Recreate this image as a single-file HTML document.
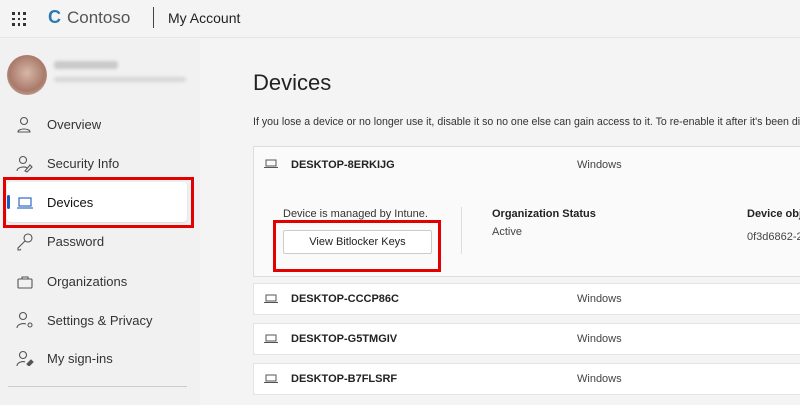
<!DOCTYPE html>
<html><head><meta charset="utf-8"><style>
*{margin:0;padding:0;box-sizing:border-box}
html,body{width:800px;height:405px;overflow:hidden}
body{background:#f4f4f4;font-family:"Liberation Sans",sans-serif;color:#222}
#w{position:relative;width:800px;height:405px;overflow:hidden}
.a{position:absolute;white-space:nowrap}
.hdr{left:0;top:0;width:800px;height:38px;background:#f4f4f4;border-bottom:1px solid #e6e6e6}
.side{left:0;top:39px;width:200px;height:366px;background:#f1f1f1}
.nav{font-size:13px;color:#333}
.ic{stroke:#555;fill:none;stroke-width:1.1}
.card{background:#fff;border:1px solid #ddd}
.row{left:253px;width:547px;height:32px;background:#fff;border:1px solid #e4e4e4;border-right:none}
.dn{font-size:11px;font-weight:bold;color:#222}
.win{font-size:11px;color:#444}
</style></head><body><div id="w">
<div class="a hdr"></div>
<div class="a" style="left:12px;top:12px;width:14px;height:14px;display:grid;grid-template-columns:repeat(3,2.5px);gap:3px">
<i style="background:#333;width:2.5px;height:2.5px"></i><i style="background:#333;width:2.5px;height:2.5px"></i><i style="background:#333;width:2.5px;height:2.5px"></i><i style="background:#333;width:2.5px;height:2.5px"></i><i style="background:#333;width:2.5px;height:2.5px"></i><i style="background:#333;width:2.5px;height:2.5px"></i><i style="background:#333;width:2.5px;height:2.5px"></i><i style="background:#333;width:2.5px;height:2.5px"></i><i style="background:#333;width:2.5px;height:2.5px"></i></div>
<div class="a" style="left:48px;top:7px;font-size:18px;color:#2a7ab0;font-weight:bold">C</div>
<div class="a" style="left:67px;top:8px;font-size:17px;color:#555">Contoso</div>
<div class="a" style="left:153px;top:7px;width:1px;height:21px;background:#444"></div>
<div class="a" style="left:168px;top:10px;font-size:14px;color:#222">My Account</div>
<div class="a side"></div>
<div class="a" style="left:7px;top:55px;width:40px;height:40px;border-radius:50%;background:radial-gradient(circle at 50% 45%,#d7b7a8,#a97a6a 60%,#d8d0cc)"></div>
<div class="a" style="left:54px;top:61px;width:64px;height:8px;background:#c9c9c9;border-radius:3px;filter:blur(1.5px)"></div>
<div class="a" style="left:54px;top:77px;width:132px;height:5px;background:#d6d6d6;border-radius:3px;filter:blur(1.5px)"></div>
<div class="a" style="left:7px;top:182px;width:180px;height:40px;background:#fff;border-radius:4px;box-shadow:0 1px 2px rgba(0,0,0,.1)"></div>
<div class="a" style="left:7px;top:195px;width:3px;height:14px;background:#1d5cbf;border-radius:2px"></div>
<svg class="a" style="left:16px;top:116px" width="18" height="250" viewBox="0 0 18 250">
<g class="ic"><circle cx="8" cy="5" r="3.5"/><path d="M2 16c0-4 12-4 12 0z"/>
<circle cx="7" cy="44" r="3.5"/><path d="M1 55c0-4 8-5 10-3M9 55l5-6 2 2-5 5z"/>
<rect x="3" y="82" width="12" height="8" stroke="#1d5cbf"/><path d="M1 92h16" stroke="#1d5cbf"/>
<circle cx="12" cy="122" r="4"/><path d="M9 125l-7 7v2h2l1-1"/>
<rect x="2" y="163" width="14" height="9" rx="1"/><path d="M6 163v-2h6v2"/>
<circle cx="7" cy="200" r="3.5"/><path d="M1 212c0-4 6-5 9-4"/><circle cx="14" cy="209" r="2"/>
<circle cx="7" cy="239" r="3.5"/><path d="M1 250c0-4 6-5 8-4"/><path d="M11 248l4-4 2 2-4 4z" fill="#555"/></g></svg>
<div class="a nav" style="left:47px;top:117px">Overview</div>
<div class="a nav" style="left:47px;top:156px">Security Info</div>
<div class="a nav" style="left:47px;top:195px;color:#111">Devices</div>
<div class="a nav" style="left:47px;top:234px">Password</div>
<div class="a nav" style="left:47px;top:274px">Organizations</div>
<div class="a nav" style="left:47px;top:313px">Settings &amp; Privacy</div>
<div class="a nav" style="left:47px;top:351px">My sign-ins</div>
<div class="a" style="left:8px;top:386px;width:179px;height:1px;background:#ccc"></div>
<div class="a" style="left:3px;top:177px;width:191px;height:51px;border:3px solid #e30000"></div>

<div class="a" style="left:253px;top:70px;font-size:22px;color:#222">Devices</div>
<div class="a" style="left:253px;top:116px;font-size:10.6px;color:#333">If you lose a device or no longer use it, disable it so no one else can gain access to it. To re-enable it after it's been disabled</div>
<div class="a card" style="left:253px;top:146px;width:547px;height:131px;background:#fafafa;border-right:none"></div>
<svg class="a" style="left:264px;top:159px" width="14" height="10"><rect x="2" y="1" width="10" height="6" fill="none" stroke="#555"/><path d="M0 8.5h14" stroke="#555"/></svg>
<div class="a dn" style="left:291px;top:159px">DESKTOP-8ERKIJG</div>
<div class="a win" style="left:577px;top:159px">Windows</div>
<div class="a" style="left:283px;top:208px;font-size:11px;color:#333">Device is managed by Intune.</div>
<div class="a" style="left:283px;top:230px;width:149px;height:24px;background:#fff;border:1px solid #ccc;border-radius:2px;font-size:11px;text-align:center;line-height:22px;color:#222">View Bitlocker Keys</div>
<div class="a" style="left:273px;top:220px;width:168px;height:52px;border:3px solid #e30000"></div>
<div class="a" style="left:461px;top:207px;width:1px;height:47px;background:#ddd"></div>
<div class="a" style="left:492px;top:208px;font-size:11px;font-weight:bold">Organization Status</div>
<div class="a" style="left:492px;top:226px;font-size:11px;color:#444">Active</div>
<div class="a" style="left:747px;top:208px;font-size:11px;font-weight:bold">Device obj</div>
<div class="a" style="left:747px;top:231px;font-size:11px;color:#444">0f3d6862-2</div>

<div class="a row" style="top:283px"></div>
<div class="a row" style="top:323px"></div>
<div class="a row" style="top:363px"></div>
<svg class="a" style="left:264px;top:294px" width="14" height="100"><g fill="none" stroke="#555"><rect x="2" y="1" width="10" height="6"/><path d="M0 8.5h14"/><rect x="2" y="41" width="10" height="6"/><path d="M0 48.5h14"/><rect x="2" y="81" width="10" height="6"/><path d="M0 88.5h14"/></g></svg>
<div class="a dn" style="left:291px;top:293px">DESKTOP-CCCP86C</div>
<div class="a win" style="left:577px;top:293px">Windows</div>
<div class="a dn" style="left:291px;top:333px">DESKTOP-G5TMGIV</div>
<div class="a win" style="left:577px;top:333px">Windows</div>
<div class="a dn" style="left:291px;top:373px">DESKTOP-B7FLSRF</div>
<div class="a win" style="left:577px;top:373px">Windows</div>
</div></body></html>
